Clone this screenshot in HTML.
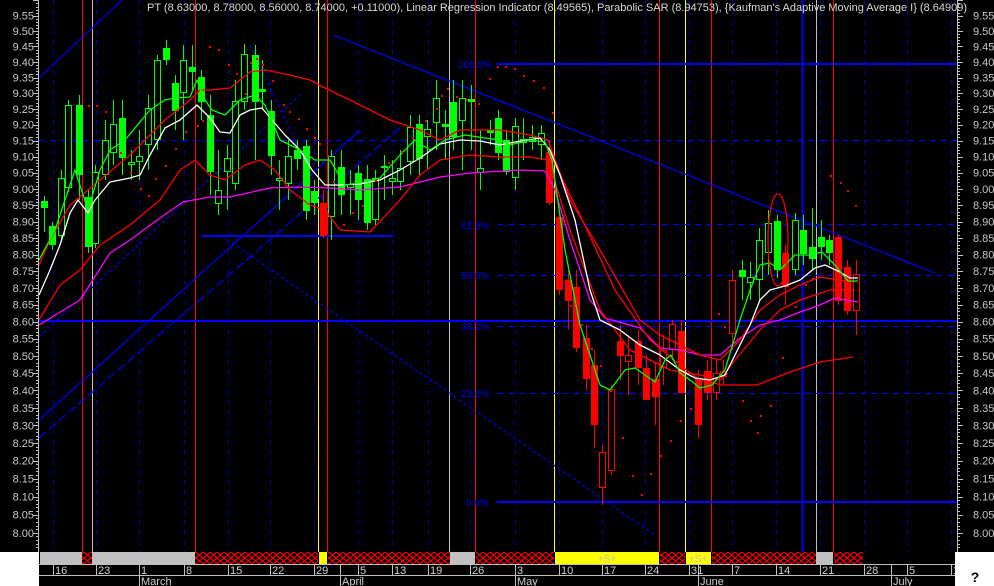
<!DOCTYPE html>
<html><head><meta charset="utf-8"><style>
html,body{margin:0;padding:0;background:#fff;}
body{width:994px;height:586px;overflow:hidden;position:relative;font-family:"Liberation Sans",sans-serif;}
svg{position:absolute;left:0;top:0;}
</style></head><body>
<svg id="s" width="994" height="586" viewBox="0 0 994 586" xmlns="http://www.w3.org/2000/svg" shape-rendering="crispEdges">
<defs>
<pattern id="hx" width="7" height="6" patternUnits="userSpaceOnUse">
<rect width="7" height="6" fill="#000"/>
<path d="M0 0 L7 6 M7 0 L0 6" stroke="#ff0000" stroke-width="1.2" shape-rendering="auto"/>
</pattern>
</defs>
<rect x="0" y="0" width="994" height="552" fill="#000"/>
<rect x="39" y="552" width="916" height="34" fill="#000"/>
<g id="grid"></g>
<g id="vl"></g>
<g id="hl">
<line x1="39" y1="140.5" x2="957" y2="140.5" stroke="#0000ff" stroke-dasharray="6,5"/>
<line x1="497" y1="64" x2="957" y2="64" stroke="#0000ff" stroke-width="2"/>
<line x1="497" y1="224.5" x2="957" y2="224.5" stroke="#0000ff" stroke-dasharray="6,5"/>
<line x1="497" y1="275.5" x2="957" y2="275.5" stroke="#0000ff" stroke-dasharray="6,5"/>
<line x1="39" y1="321" x2="957" y2="321" stroke="#0000ff" stroke-width="2"/>
<line x1="497" y1="326.5" x2="957" y2="326.5" stroke="#0000ff" stroke-dasharray="6,5"/>
<line x1="497" y1="393.5" x2="957" y2="393.5" stroke="#0000ff" stroke-dasharray="6,5"/>
<line x1="497" y1="502" x2="957" y2="502" stroke="#0000ff" stroke-width="2"/>
<line x1="202" y1="236" x2="393" y2="236" stroke="#0000ff" stroke-width="2"/>
</g>
<g fill="none" stroke="#0000ff" stroke-width="1.2" shape-rendering="auto">
<line x1="39" y1="78" x2="122" y2="0"/>
<line x1="39" y1="420" x2="360" y2="130"/>
<line x1="39" y1="438" x2="400" y2="128" stroke-dasharray="9,4"/>
<line x1="39" y1="337" x2="300" y2="95" stroke-dasharray="3,3"/>
<line x1="333" y1="35" x2="935" y2="273"/>
<line x1="222" y1="236" x2="655" y2="535" stroke-dasharray="3,3"/>
<line x1="250" y1="45" x2="330" y2="215" stroke-dasharray="3,3"/>
</g>
<g id="candles"></g>
<g fill="none" stroke-width="1.3" shape-rendering="auto" stroke-linejoin="round">
<polyline stroke="#ff00ff" points="39,325 80,300 110,253 130,240 160,218 183,202 210,197 230,197 270,188 300,187 330,188 360,190 400,187 440,177 470,173 520,170 545,171 555,190 570,240 590,300 605,318 640,328 660,348 680,350 700,355 720,355 740,338 760,325 780,320 800,312 820,305 835,298 858,302"/>
<polyline stroke="#ff0000" points="39,265 50,240 70,205 100,180 130,155 165,120 190,100 200,90 210,90 230,88 250,72 265,70 290,75 310,80 325,88 350,100 390,120 420,130 440,140 460,130 500,130 530,135 548,140 570,200 600,250 620,285 640,320 660,335 680,345 700,355 720,360 740,340 760,310 780,295 800,285 820,277 840,280 855,282"/>
<polyline stroke="#ff0000" points="39,320 60,285 80,270 100,245 130,225 160,200 180,170 195,160 210,175 225,180 245,165 260,160 275,170 290,190 310,205 325,210 340,230 370,232 400,200 420,175 440,160 470,155 500,157 530,157 548,160 570,230 600,310 630,350 650,360 670,370 700,375 720,380 735,360 760,330 780,310 800,300 830,290 855,290"/>
<polyline stroke="#ff0000" points="548,150 580,215 615,290 650,340 680,365 700,380 722,385 757,385 790,372 820,362 853,357"/>
<polyline stroke="#ffffff" points="39,295 50,270 60,245 70,213 78,200 88,213 95,200 110,182 130,178 140,175 150,155 165,128 180,120 197,105 210,118 220,132 230,133 240,115 250,110 262,108 272,120 285,135 300,150 312,170 325,185 340,185 360,184 380,180 400,170 420,158 440,144 460,140 480,141 500,145 515,142 540,138 550,150 560,175 575,220 590,290 600,320 620,330 640,345 660,355 680,370 695,378 710,380 725,375 735,355 750,325 760,300 770,290 785,286 800,280 815,268 825,265 840,272 850,278 858,278"/>
<polyline stroke="#00ff00" points="39,260 55,230 65,200 75,170 88,210 100,170 110,150 125,140 150,110 165,100 175,98 190,97 197,80 205,100 212,110 225,115 240,100 255,95 265,105 280,140 300,150 315,160 330,160 345,185 365,182 380,178 400,155 415,140 430,150 445,140 465,135 485,138 500,140 510,145 530,140 545,142 552,160 565,250 580,325 600,385 610,390 625,370 635,368 645,375 655,382 665,360 671,355 680,373 690,380 700,388 712,385 725,370 740,320 750,290 760,265 770,263 780,270 795,255 810,255 822,252 835,265 848,281 858,281"/>
<ellipse cx="778" cy="240" rx="10" ry="46" stroke="#ff0000"/>
</g>
<g id="sar" fill="#ff0000"></g>
<g font-size="10" fill="#0000ff" font-family="Liberation Sans,sans-serif">
<text x="458" y="68">100.0%</text>
<text x="461" y="229">61.8%</text>
<text x="461" y="279">50.0%</text>
<text x="461" y="330">38.2%</text>
<text x="461" y="397">23.6%</text>
<text x="466" y="506">0.0%</text>
</g>
<text x="147" y="11" font-size="11" fill="#d8d8d8">PT (8.63000, 8.78000, 8.56000, 8.74000, +0.11000), Linear Regression Indicator (8.49565), Parabolic SAR (8.94753), {Kaufman's Adaptive Moving Average I} (8.64909)</text>
<g id="ticks" stroke="#c0c0c0"></g>
<line x1="38.5" y1="0" x2="38.5" y2="552" stroke="#c0c0c0"/>
<line x1="957.5" y1="0" x2="957.5" y2="552" stroke="#c0c0c0"/>
<g font-size="11" fill="#c8c8c8">
<g text-anchor="end">
<text x="34" y="19.7">9.55</text><text x="34" y="35">9.50</text><text x="34" y="50.4">9.45</text><text x="34" y="65.9">9.40</text><text x="34" y="81.5">9.35</text><text x="34" y="97.2">9.30</text><text x="34" y="112.9">9.25</text><text x="34" y="128.7">9.20</text><text x="34" y="144.6">9.15</text><text x="34" y="160.6">9.10</text><text x="34" y="176.7">9.05</text><text x="34" y="192.9">9.00</text><text x="34" y="209.2">8.95</text><text x="34" y="225.5">8.90</text><text x="34" y="242">8.85</text><text x="34" y="258.5">8.80</text><text x="34" y="275.2">8.75</text><text x="34" y="291.9">8.70</text><text x="34" y="308.7">8.65</text><text x="34" y="325.7">8.60</text><text x="34" y="342.7">8.55</text><text x="34" y="359.8">8.50</text><text x="34" y="377">8.45</text><text x="34" y="394.4">8.40</text><text x="34" y="411.8">8.35</text><text x="34" y="429.3">8.30</text><text x="34" y="447">8.25</text><text x="34" y="464.7">8.20</text><text x="34" y="482.6">8.15</text><text x="34" y="500.6">8.10</text><text x="34" y="518.6">8.05</text><text x="34" y="536.8">8.00</text>
</g>
<g>
<text x="973" y="19.7">9.55</text><text x="973" y="35">9.50</text><text x="973" y="50.4">9.45</text><text x="973" y="65.9">9.40</text><text x="973" y="81.5">9.35</text><text x="973" y="97.2">9.30</text><text x="973" y="112.9">9.25</text><text x="973" y="128.7">9.20</text><text x="973" y="144.6">9.15</text><text x="973" y="160.6">9.10</text><text x="973" y="176.7">9.05</text><text x="973" y="192.9">9.00</text><text x="973" y="209.2">8.95</text><text x="973" y="225.5">8.90</text><text x="973" y="242">8.85</text><text x="973" y="258.5">8.80</text><text x="973" y="275.2">8.75</text><text x="973" y="291.9">8.70</text><text x="973" y="308.7">8.65</text><text x="973" y="325.7">8.60</text><text x="973" y="342.7">8.55</text><text x="973" y="359.8">8.50</text><text x="973" y="377">8.45</text><text x="973" y="394.4">8.40</text><text x="973" y="411.8">8.35</text><text x="973" y="429.3">8.30</text><text x="973" y="447">8.25</text><text x="973" y="464.7">8.20</text><text x="973" y="482.6">8.15</text><text x="973" y="500.6">8.10</text><text x="973" y="518.6">8.05</text><text x="973" y="536.8">8.00</text>
</g>
</g>
<!-- bottom bar -->
<g>
<rect x="40" y="552" width="42" height="12" fill="#c0c0c0"/>
<rect x="82" y="552" width="10" height="12" fill="url(#hx)"/>
<rect x="92" y="552" width="103" height="12" fill="#c0c0c0"/>
<rect x="195" y="552" width="123" height="12" fill="url(#hx)"/>
<rect x="319" y="552" width="8" height="12" fill="#ffff00"/>
<rect x="328" y="552" width="122" height="12" fill="url(#hx)"/>
<rect x="450" y="552" width="25" height="12" fill="#c0c0c0"/>
<rect x="476" y="552" width="78" height="12" fill="url(#hx)"/>
<rect x="555" y="552" width="104" height="12" fill="#ffff00"/>
<rect x="660" y="552" width="25" height="12" fill="url(#hx)"/>
<rect x="686" y="552" width="25" height="12" fill="#ffff00"/>
<rect x="712" y="552" width="104" height="12" fill="url(#hx)"/>
<rect x="816" y="552" width="17" height="12" fill="#c0c0c0"/>
<rect x="834" y="552" width="29" height="12" fill="url(#hx)"/>
<text x="607" y="562" font-size="10" fill="#c0c0c0" text-anchor="middle">+S+</text>
<text x="698" y="562" font-size="10" fill="#c0c0c0" text-anchor="middle">+S+</text>
</g>
<line x1="39" y1="564.5" x2="955" y2="564.5" stroke="#c0c0c0"/>
<line x1="39" y1="575.5" x2="955" y2="575.5" stroke="#c0c0c0"/>
<g id="dt" stroke="#c0c0c0"></g>
<g font-size="11" fill="#d0d0d0">
<text x="55" y="574">16</text><text x="98" y="574">23</text><text x="141" y="574">1</text><text x="186" y="574">8</text><text x="230" y="574">15</text><text x="272" y="574">22</text><text x="316" y="574">29</text><text x="360" y="574">5</text><text x="394" y="574">13</text><text x="430" y="574">19</text><text x="472" y="574">26</text><text x="517" y="574">3</text><text x="561" y="574">10</text><text x="604" y="574">17</text><text x="647" y="574">24</text><text x="691" y="574">31</text><text x="734" y="574">7</text><text x="778" y="574">14</text><text x="822" y="574">21</text><text x="866" y="574">28</text><text x="909" y="574">5</text><text x="953" y="574">1</text>
<text x="141" y="585">March</text><text x="342" y="585">April</text><text x="517" y="585">May</text><text x="700" y="585">June</text><text x="893" y="585">July</text>
</g>
<rect x="0" y="552" width="39" height="34" fill="#fff"/>
<rect x="955" y="552" width="39" height="34" fill="#fff"/>
<text x="975" y="582" font-size="14" font-weight="bold" fill="#000" text-anchor="middle">?</text>
</svg>
<script>
var NS="http://www.w3.org/2000/svg";
function el(p,t,a){var e=document.createElementNS(NS,t);for(var k in a)e.setAttribute(k,a[k]);document.getElementById(p).appendChild(e);return e;}
var dates=[53,96,139,184,228,270,314,358,392,428,470,515,559,602,645,689,732,776,820,864,907,951];
dates.forEach(function(x){el('grid','line',{x1:x+.5,y1:0,x2:x+.5,y2:552,stroke:'#0000a0','stroke-dasharray':'5,5'});
el('dt','line',{x1:x+.5,y1:564,x2:x+.5,y2:575});});
[139,340,515,698,891].forEach(function(x){el('dt','line',{x1:x+.5,y1:564,x2:x+.5,y2:586});});
var vls=[[82,'#ff0000'],[92,'#c0c0c0'],[195,'#ff0000'],[318,'#ffff00'],[327,'#ff0000'],[449,'#c0c0c0'],[475,'#ff0000'],[554,'#ffff00'],[659,'#ff0000'],[685,'#ffff00'],[711,'#ff0000'],[802,'#0000ff'],[816,'#c0c0c0'],[833,'#ff0000']];
vls.forEach(function(v){el('vl','line',{x1:v[0]+.5,y1:0,x2:v[0]+.5,y2:552,stroke:v[1],'stroke-width':v[1]=='#0000ff'?2:1.2});});
function Y(p){return 15.7+2920*Math.log(9.55/p);}
for(var p=9.60;p>=7.96;p-=0.01){var y=Math.round(Y(p))+.5;var maj=Math.abs(p*20-Math.round(p*20))<0.01;
el('ticks','line',{x1:maj?33:36,y1:y,x2:39,y2:y});el('ticks','line',{x1:957,y1:y,x2:maj?963:960,y2:y});}
var C=[[44,201,208,196,232,'G'],[52,226,245,222,250,'G'],[61,178,236,170,240,'g'],[68,105,188,100,192,'g'],[79,105,175,95,200,'G'],[88,197,247,190,253,'G'],[95,172,244,165,248,'g'],[105,140,175,120,180,'g'],[113,124,153,100,165,'g'],[122,118,158,100,175,'G'],[131,162,165,150,180,'g'],[139,156,162,130,180,'g'],[148,108,145,95,170,'g'],[157,60,140,55,150,'g'],[166,48,60,40,65,'G'],[175,83,111,75,130,'G'],[183,60,93,45,140,'g'],[192,67,72,45,90,'G'],[201,77,102,70,120,'G'],[210,115,172,95,195,'G'],[218,190,204,150,215,'g'],[227,158,172,145,210,'g'],[235,101,184,80,190,'g'],[244,54,102,44,110,'g'],[255,55,102,45,160,'G'],[262,89,92,60,110,'G'],[271,111,156,100,175,'G'],[279,178,181,160,210,'g'],[288,156,184,140,200,'g'],[297,150,159,140,170,'G'],[306,146,211,140,220,'G'],[314,191,203,180,215,'G'],[323,203,236,190,238,'R'],[331,156,217,150,240,'g'],[341,167,195,150,215,'G'],[350,184,188,170,215,'g'],[358,173,200,165,220,'G'],[367,179,223,165,230,'G'],[375,178,220,170,225,'g'],[384,166,168,155,200,'G'],[392,178,182,160,195,'g'],[400,168,182,150,190,'g'],[410,127,162,115,175,'g'],[419,124,159,115,175,'G'],[427,129,137,120,170,'g'],[436,98,123,80,150,'g'],[445,124,127,110,160,'G'],[453,102,137,80,150,'G'],[462,98,121,80,170,'g'],[471,99,102,85,150,'G'],[480,168,173,130,190,'g'],[490,130,133,120,145,'G'],[498,118,153,110,160,'G'],[506,140,172,130,175,'G'],[515,126,178,118,190,'g'],[523,139,143,118,160,'g'],[532,137,142,125,150,'g'],[541,133,145,125,160,'g'],[549,152,203,140,205,'R'],[559,217,290,210,295,'R'],[568,280,301,270,330,'R'],[576,287,348,270,352,'R'],[586,338,379,325,390,'R'],[594,365,425,350,448,'R'],[602,452,488,445,505,'r'],[611,389,471,385,475,'r'],[620,341,356,325,380,'R'],[628,355,362,335,395,'r'],[638,341,368,330,385,'R'],[646,368,400,355,400,'R'],[655,379,397,362,425,'R'],[663,350,368,335,385,'r'],[672,324,350,320,360,'r'],[681,331,393,320,393,'R'],[698,379,425,370,438,'R'],[707,371,393,360,400,'R'],[716,373,393,360,400,'r'],[723,371,377,360,385,'r'],[732,280,334,270,350,'r'],[742,270,277,260,300,'G'],[750,277,283,262,300,'g'],[759,240,280,228,300,'g'],[768,223,253,210,275,'g'],[777,221,270,215,278,'G'],[785,253,287,245,305,'R'],[795,220,270,213,275,'g'],[803,230,254,215,265,'G'],[812,247,259,208,270,'G'],[821,237,247,220,260,'G'],[829,240,253,235,265,'G'],[838,237,301,235,305,'R'],[847,267,311,260,315,'R'],[856,274,311,260,335,'r']];
C.forEach(function(c){var col=(c[5]=='G'||c[5]=='g')?'#00ff00':'#ff0000';var fill=(c[5]=='G'||c[5]=='R');
var x=c[0];el('candles','line',{x1:x+.5,y1:c[3],x2:x+.5,y2:c[4],stroke:col});
if(fill)el('candles','rect',{x:x-3,y:c[1],width:7,height:Math.max(2,c[2]-c[1]),fill:col});
else el('candles','rect',{x:x-2.5,y:c[1]+.5,width:6,height:Math.max(2,c[2]-c[1]-1),fill:'#000',stroke:col});});
var S=[[88,105],[96,105],[105,111],[120,152],[130,172],[140,188],[148,195],[155,178],[165,165],[175,148],[185,131],[197,125],[202,120],[209,46],[218,49],[228,64],[236,73],[245,93],[250,62],[256,58],[262,64],[272,80],[283,104],[289,111],[298,118],[306,128],[314,137],[319,143],[327,155],[333,181],[343,224],[352,212],[362,205],[375,180],[388,162],[401,151],[412,137],[425,120],[436,108],[441,95],[447,88],[456,96],[466,99],[478,103],[489,78],[497,66],[505,66],[514,68],[523,75],[533,80],[543,87],[552,112],[560,280],[570,305],[581,324],[591,348],[600,365],[610,390],[622,437],[632,475],[641,494],[650,473],[660,455],[670,440],[680,420],[690,408],[700,390],[710,374],[718,313],[724,326],[742,400],[750,420],[757,432],[760,415],[770,405],[782,357],[795,306],[805,284],[812,278],[830,175],[840,182],[847,190],[855,205]];
S.forEach(function(s){el('sar','rect',{x:s[0],y:s[1],width:2,height:2});});
</script>
</body></html>
